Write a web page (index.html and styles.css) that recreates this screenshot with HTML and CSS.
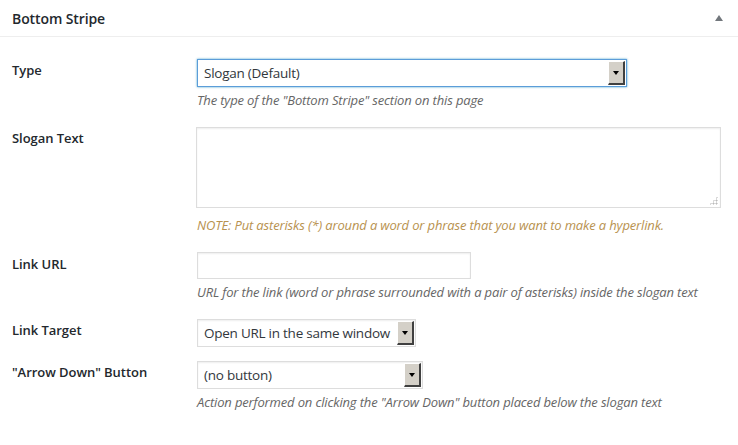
FILE: index.html
```html
<!DOCTYPE html>
<html lang="en">
<head>
    <meta charset="UTF-8">
    <title>Bottom Stripe</title>
    <link rel="stylesheet" href="styles.css">
</head>
<body>
    <div class="postbox">
        <div class="postbox-header">
            <h2>Bottom Stripe</h2>
            <span class="toggle-arrow"></span>
        </div>

        <div class="inside">
            <div class="field-row">
                <div class="field-label">Type</div>
                <div class="field-body">
                    <div class="select select-focus" style="width: 430px">
                        <span class="select-value">Slogan (Default)</span>
                        <span class="select-btn"></span>
                    </div>
                    <p class="description">The type of the "Bottom Stripe" section on this page</p>
                </div>
            </div>

            <div class="field-row">
                <div class="field-label">Slogan Text</div>
                <div class="field-body">
                    <div class="textarea">
                        <span class="grip"></span>
                    </div>
                    <p class="description note">NOTE: Put asterisks (*) around a word or phrase that you want to make a hyperlink.</p>
                </div>
            </div>

            <div class="field-row">
                <div class="field-label label-url">Link URL</div>
                <div class="field-body">
                    <div class="text-input"></div>
                    <p class="description">URL for the link (word or phrase surrounded with a pair of asterisks) inside the slogan text</p>
                </div>
            </div>

            <div class="field-row tight">
                <div class="field-label">Link Target</div>
                <div class="field-body">
                    <div class="select" style="width: 219px">
                        <span class="select-value">Open URL in the same window</span>
                        <span class="select-btn"></span>
                    </div>
                </div>
            </div>

            <div class="field-row">
                <div class="field-label">"Arrow Down" Button</div>
                <div class="field-body">
                    <div class="select" style="width: 226px">
                        <span class="select-value">(no button)</span>
                        <span class="select-btn"></span>
                    </div>
                    <p class="description">Action performed on clicking the "Arrow Down" button placed below the slogan text</p>
                </div>
            </div>
        </div>
    </div>
</body>
</html>
```

FILE: styles.css
```css
body {
    margin: 0;
    padding: 0;
    background: #ffffff;
    font-family: 'Open Sans', 'Noto Sans', sans-serif;
    color: #23282d;
}

.postbox {
    width: 738px;
    background: #ffffff;
}

.postbox-header {
    height: 36px;
    border-bottom: 1px solid #eeeeee;
    display: flex;
    align-items: center;
    justify-content: space-between;
    padding: 0 15px 0 12px;
}

.postbox-header h2 {
    margin: 0;
    font-size: 14px;
    font-weight: 600;
    color: #23282d;
    letter-spacing: -0.1px;
}

.toggle-arrow {
    width: 0;
    height: 0;
    border-left: 4px solid transparent;
    border-right: 4px solid transparent;
    border-bottom: 6px solid #72777c;
    margin-top: -1px;
}

.inside {
    padding: 22px 0 0 12px;
    display: flex;
    flex-direction: column;
    gap: 18px;
}

.field-row {
    display: grid;
    grid-template-columns: 185px 1fr;
}

.field-row.tight {
    margin-bottom: -4px;
}

.field-label {
    font-size: 13px;
    font-weight: 600;
    line-height: 20px;
    padding-top: 1px;
    color: #23282d;
    letter-spacing: -0.05px;
}

.field-label.label-url {
    padding-top: 2px;
}

.field-body {
    display: flex;
    flex-direction: column;
    align-items: flex-start;
}

.select {
    box-sizing: border-box;
    height: 28px;
    border: 1px solid #dddddd;
    box-shadow: inset 0 1px 2px rgba(0, 0, 0, 0.07);
    background: #ffffff;
    display: flex;
    align-items: center;
    justify-content: space-between;
    padding: 0 1px 0 6px;
}

.select-focus {
    border-color: #5b9dd9;
    box-shadow: 0 0 2px rgba(30, 140, 190, 0.8);
}

.select-value {
    font-size: 13.5px;
    color: #32373c;
    letter-spacing: -0.25px;
    white-space: nowrap;
}

.select-btn {
    box-sizing: border-box;
    width: 17px;
    height: 24px;
    background: #d4d0c8;
    border-top: 1px solid #ffffff;
    border-left: 1px solid #ffffff;
    border-right: 2px solid #404040;
    border-bottom: 2px solid #404040;
    display: flex;
    align-items: center;
    justify-content: center;
}

.select-btn::after {
    content: "";
    width: 0;
    height: 0;
    border-left: 3.5px solid transparent;
    border-right: 3.5px solid transparent;
    border-top: 4px solid #000000;
}

.textarea {
    box-sizing: border-box;
    width: 525px;
    height: 81px;
    border: 1px solid #dddddd;
    box-shadow: inset 0 1px 2px rgba(0, 0, 0, 0.07);
    position: relative;
    margin-left: -1px;
}

.grip {
    position: absolute;
    right: 2px;
    bottom: 2px;
    width: 9px;
    height: 9px;
    background:
        radial-gradient(circle, #bbbbbb 45%, transparent 50%) 0 0 / 3px 3px;
    clip-path: polygon(100% 0, 100% 100%, 0 100%);
}

.text-input {
    box-sizing: border-box;
    width: 274px;
    height: 27px;
    border: 1px solid #dddddd;
    box-shadow: inset 0 1px 2px rgba(0, 0, 0, 0.07);
}

.description {
    margin: 4px 0 0;
    font-size: 13px;
    font-style: italic;
    line-height: 18px;
    color: #666666;
    letter-spacing: -0.15px;
    white-space: nowrap;
}

.description.note {
    margin-top: 8px;
    color: #b8924f;
}
```
